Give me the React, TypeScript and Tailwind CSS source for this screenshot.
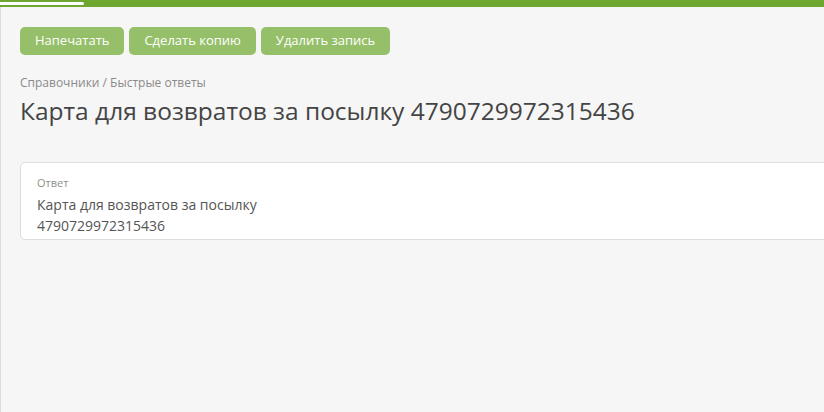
import React from "react";

export default function App() {
  const font = { fontFamily: '"Open Sans", "Noto Sans", sans-serif' };
  return (
    <div className="w-[824px] h-[412px] bg-[#f6f6f6] flex flex-col overflow-hidden" style={font}>
      <div className="h-[7px] bg-[#6ea72f] relative shrink-0">
        <div className="absolute left-0 top-[2px] h-[3px] w-[84px] bg-white rounded-r-full" />
      </div>
      <div className="flex-1 border-l border-[#dcdcdc] pl-[19px] pt-[20px]">
        <div className="flex gap-[5px]">
          <button className="h-[28px] px-[15px] rounded-[5px] bg-[#95bf68] text-white text-[13px]">Напечатать</button>
          <button className="h-[28px] px-[15px] rounded-[5px] bg-[#95bf68] text-white text-[13px]">Сделать копию</button>
          <button className="h-[28px] px-[15px] rounded-[5px] bg-[#95bf68] text-white text-[13px]">Удалить запись</button>
        </div>
        <div className="mt-[20px] text-[12px] leading-[16px] text-[#8a8a8a]">Справочники / Быстрые ответы</div>
        <h1 className="mt-[4px] text-[24.5px] leading-[32px] text-[#444]">Карта для возвратов за посылку 4790729972315436</h1>
        <div className="mt-[35px] w-[820px] h-[78px] bg-white border border-[#dedede] rounded-[5px] pl-[16px] pt-[13px]">
          <div className="text-[11px] leading-[14px] text-[#8f8f8f]">Ответ</div>
          <div className="mt-[4px] w-[250px] text-[14px] leading-[21px] text-[#555]">Карта для возвратов за посылку 4790729972315436</div>
        </div>
      </div>
    </div>
  );
}
